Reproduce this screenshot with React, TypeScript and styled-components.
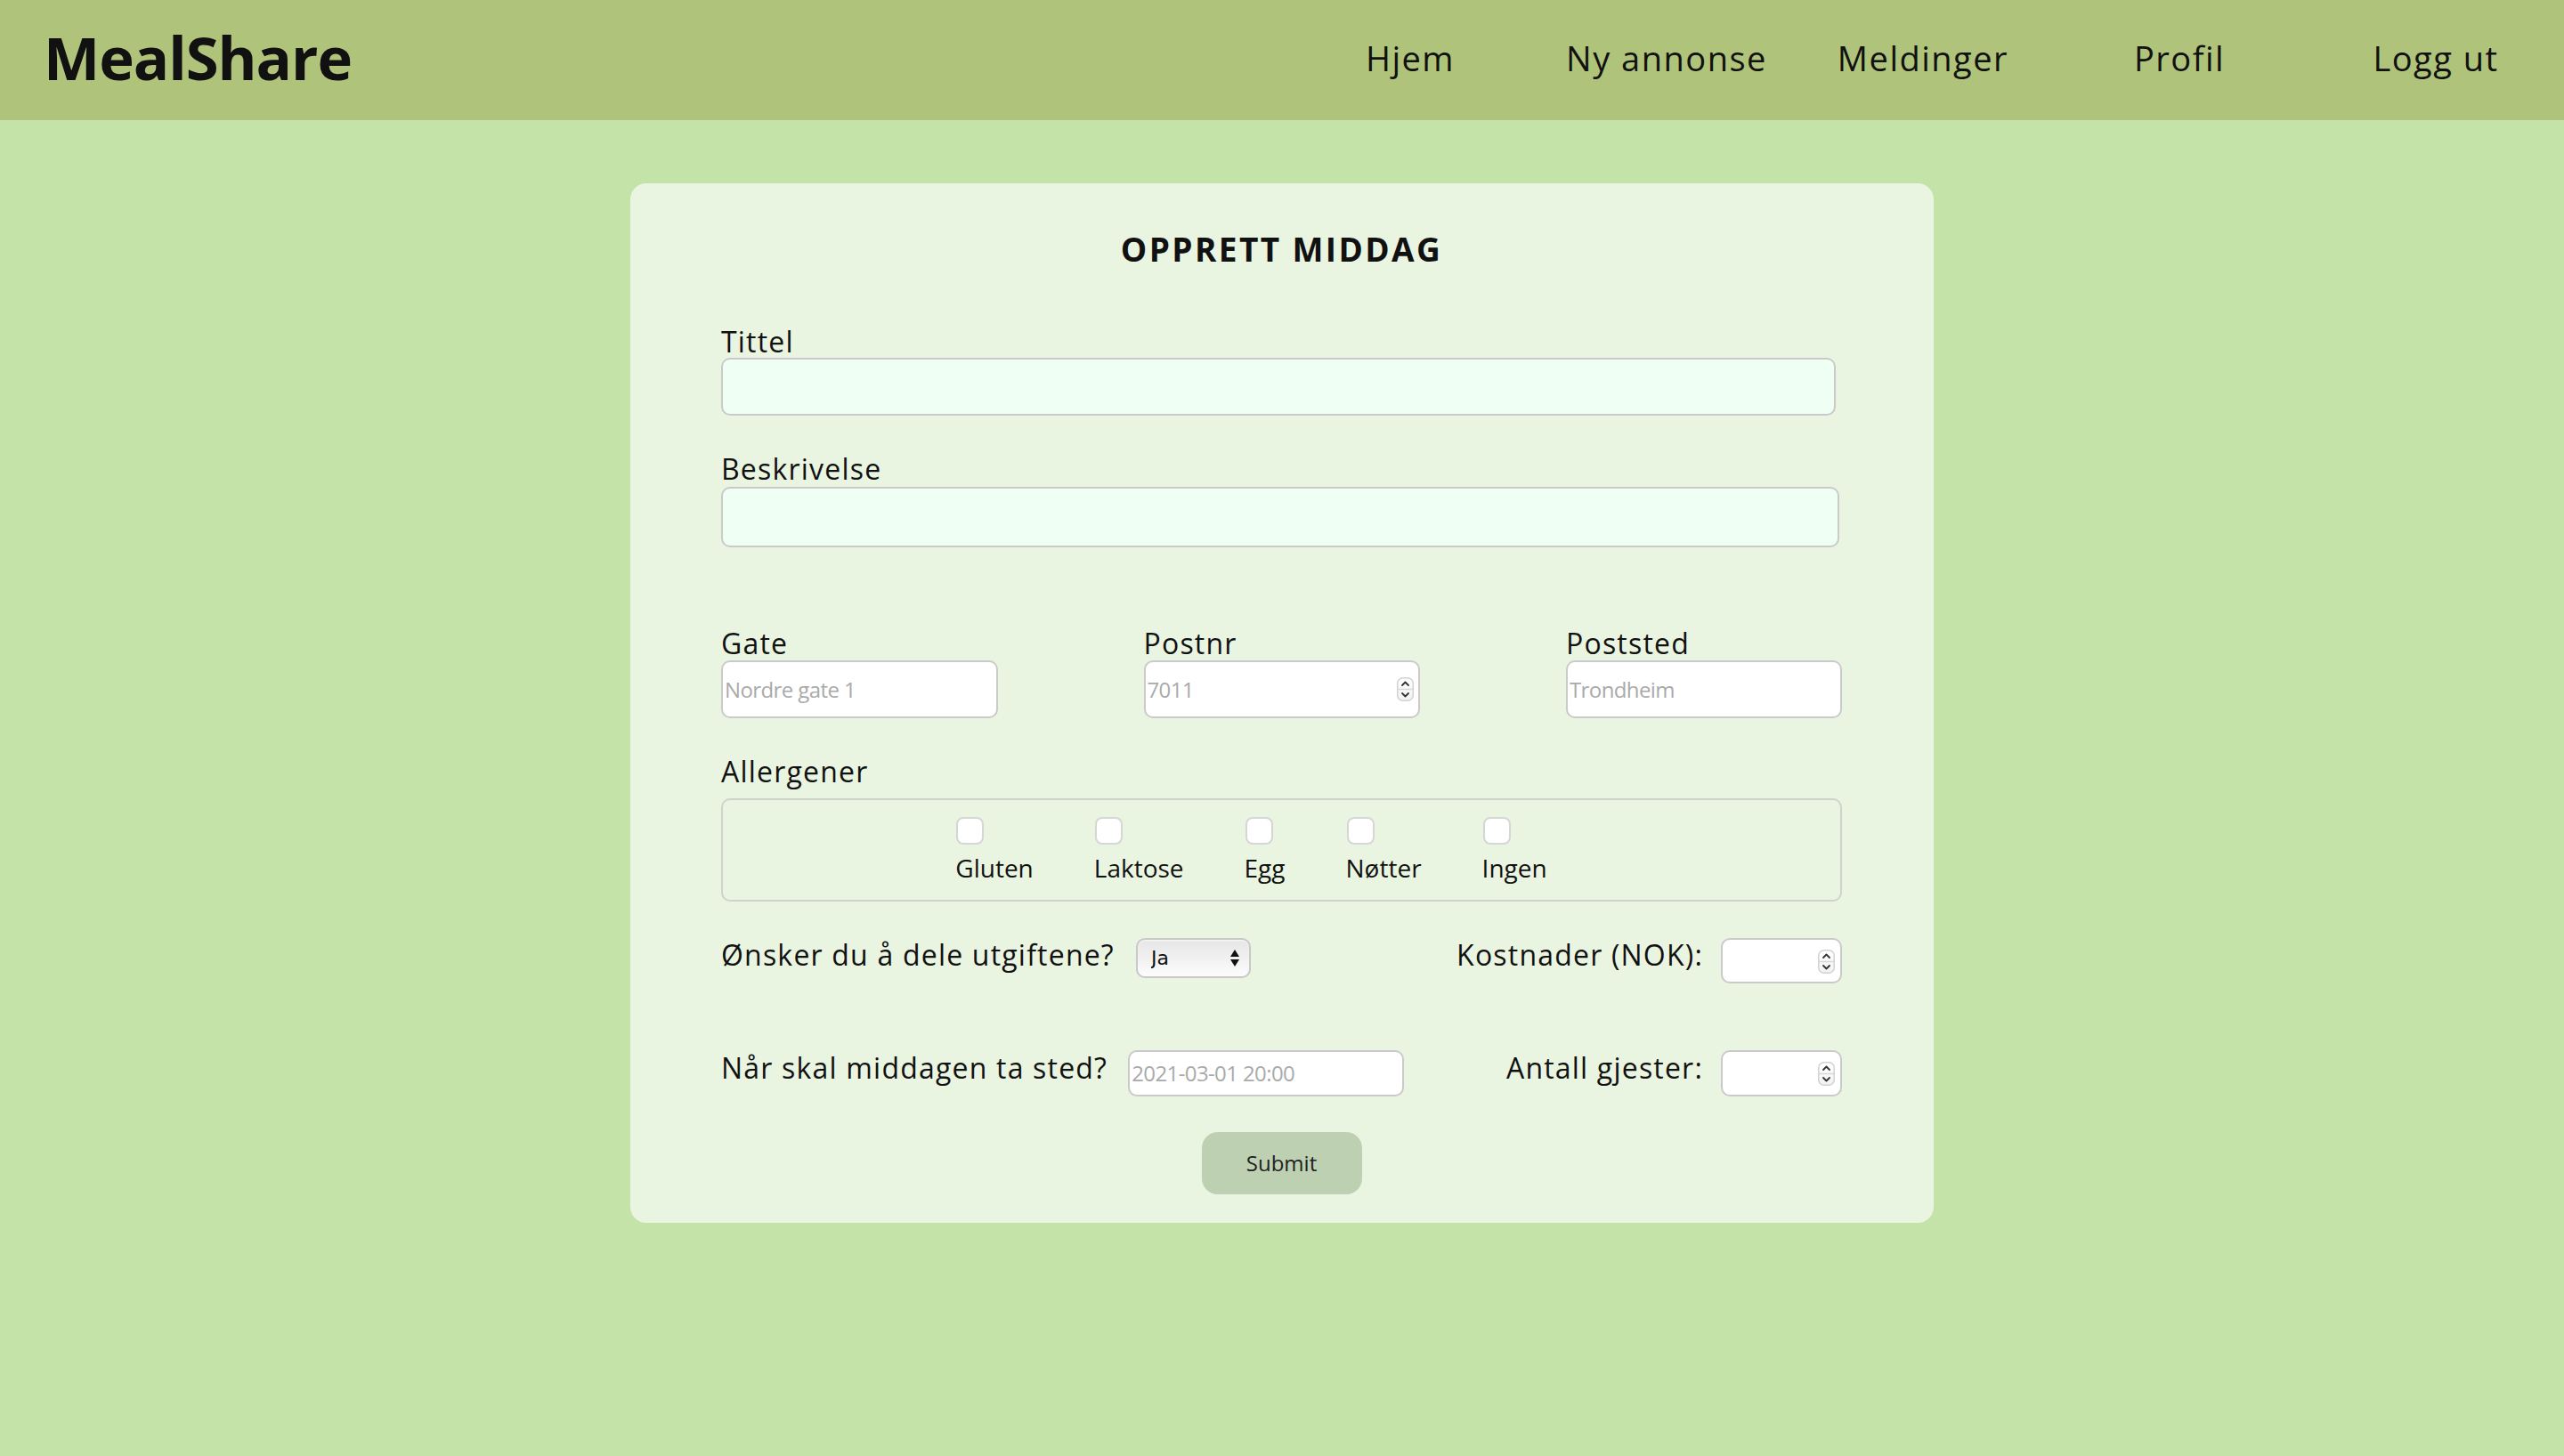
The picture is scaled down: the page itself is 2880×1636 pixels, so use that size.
import React from "react";
import styled, { createGlobalStyle } from "styled-components";

const GlobalStyle = createGlobalStyle`
  html, body { margin: 0; padding: 0; background: #c3e3a9; }
  body { font-family: "Open Sans", "Noto Sans", sans-serif; color: #111; }
  * { box-sizing: border-box; }
`;

const Page = styled.div`
  min-height: 100vh;
  background: #c3e3a9;
`;

const Header = styled.header`
  height: 135px;
  background: #afc47a;
  display: flex;
  align-items: center;
  justify-content: space-between;
  padding: 0 0 6px 49px;
`;

const Logo = styled.h1`
  margin: 0;
  font-size: 67px;
  font-weight: 700;
  line-height: 1;
  letter-spacing: -1px;
  color: #111;
`;

const Nav = styled.nav`
  width: 1440px;
  display: grid;
  grid-template-columns: repeat(5, 1fr);
`;

const NavLink = styled.a`
  text-align: center;
  font-size: 38px;
  line-height: 1;
  letter-spacing: 1.5px;
  color: #111;
  text-decoration: none;
`;

const Main = styled.main`
  padding-top: 71px;
  display: flex;
  justify-content: center;
`;

const Card = styled.form`
  width: 1464px;
  background: #eaf5e1;
  border-radius: 18px;
  padding: 49px 103px 32px 102px;
  display: flex;
  flex-direction: column;
`;

const Title = styled.h3`
  margin: 0;
  font-size: 37px;
  line-height: 50px;
  font-weight: 700;
  letter-spacing: 2.4px;
  text-align: center;
  color: #111;
`;

const Label = styled.label<{ $mt?: number }>`
  display: block;
  margin-top: ${(p) => p.$mt ?? 0}px;
  margin-bottom: -2px;
  padding-top: 2px;
  font-size: 32px;
  line-height: 40px;
  letter-spacing: 1.2px;
  color: #111;
  white-space: nowrap;
`;

const BaseInput = styled.input<{ $w: number; $h: number; $mt?: number; $bg?: string }>`
  display: block;
  width: ${(p) => p.$w}px;
  height: ${(p) => p.$h}px;
  margin-top: ${(p) => p.$mt ?? 0}px;
  background: ${(p) => p.$bg ?? "#fff"};
  border: 2px solid #cacaca;
  border-radius: 10px;
  padding: 0 0 0 2px;
  font-family: "Open Sans", sans-serif;
  font-size: 24px;
  letter-spacing: -0.6px;
  color: #111;
  outline: none;
  &::placeholder { color: #aaaaaa; }
  &::-webkit-inner-spin-button, &::-webkit-outer-spin-button { -webkit-appearance: none; margin: 0; }
`;

const ThreeCols = styled.div`
  display: flex;
  justify-content: space-between;
  margin-top: 85.6px;
`;

const Column = styled.div`
  display: flex;
  flex-direction: column;
  width: 310px;
`;

const SpinWrap = styled.div<{ $mt?: number }>`
  position: relative;
  margin-top: ${(p) => p.$mt ?? 0}px;
`;

const SpinIcon = styled.svg<{ $top: number; $right: number }>`
  position: absolute;
  top: ${(p) => p.$top}px;
  right: ${(p) => p.$right}px;
  pointer-events: none;
`;

const Fieldset = styled.fieldset`
  margin: 12.4px 0 0;
  height: 116px;
  border: 2px solid #d0d3cc;
  border-radius: 10px;
  padding: 19px 0 0;
  display: flex;
  justify-content: center;
  align-items: flex-start;
`;

const CheckItem = styled.label`
  display: flex;
  flex-direction: column;
  align-items: flex-start;
  margin-right: 68px;
`;

const CheckBox = styled.input`
  appearance: none;
  -webkit-appearance: none;
  width: 31px;
  height: 31px;
  margin: 0 0 0 1px;
  background: #fff;
  border: 2px solid #d6d6d6;
  border-radius: 8px;
`;

const CheckText = styled.span`
  margin-top: 8px;
  font-size: 28px;
  line-height: 36px;
  color: #111;
`;

const Row = styled.div<{ $mt: number }>`
  display: flex;
  justify-content: space-between;
  align-items: flex-start;
  margin-top: ${(p) => p.$mt}px;
`;

const Group = styled.div<{ $gap: number }>`
  display: flex;
  align-items: flex-start;
  gap: ${(p) => p.$gap}px;
`;

const SelectWrap = styled.div`
  position: relative;
  width: 129px;
  height: 45px;
  margin-top: 3.4px;
`;

const Select = styled.select`
  appearance: none;
  -webkit-appearance: none;
  width: 100%;
  height: 100%;
  border: 2px solid #c8c8c8;
  border-radius: 10px;
  background: linear-gradient(#e6e6e6, #f3f3f3 60%, #fdfdfd);
  box-shadow: inset 0 1px 2px rgba(255,255,255,0.8);
  padding: 0 0 0 15px;
  font-family: "DejaVu Sans", sans-serif;
  font-size: 22px;
  color: #111;
  outline: none;
`;

const SelectArrows = styled.svg`
  position: absolute;
  top: 13px;
  right: 13px;
  pointer-events: none;
`;

const SubmitButton = styled.button`
  display: block;
  align-self: center;
  margin-top: 40px;
  width: 180px;
  height: 70px;
  background: #bdd1b2;
  border: none;
  border-radius: 18px;
  font-family: "Open Sans", sans-serif;
  font-size: 24px;
  color: #222;
`;

const Spinner = ({ top, right }: { top: number; right: number }) => (
  <SpinIcon $top={top} $right={right} width="19" height="27" viewBox="0 0 19 27">
    <defs>
      <linearGradient id="spg" x1="0" y1="0" x2="0" y2="1">
        <stop offset="0" stopColor="#ffffff" />
        <stop offset="1" stopColor="#f2f2f2" />
      </linearGradient>
    </defs>
    <rect x="0.75" y="0.75" width="17.5" height="25.5" rx="6" fill="url(#spg)" stroke="#d2d2d2" strokeWidth="1.5" />
    <line x1="1" y1="13.5" x2="18" y2="13.5" stroke="#d8d8d8" strokeWidth="1.5" />
    <polyline points="6,9 9.5,5.5 13,9" fill="none" stroke="#333" strokeWidth="1.8" strokeLinecap="round" strokeLinejoin="round" />
    <polyline points="6,18 9.5,21.5 13,18" fill="none" stroke="#333" strokeWidth="1.8" strokeLinecap="round" strokeLinejoin="round" />
  </SpinIcon>
);

const allergens = ["Gluten", "Laktose", "Egg", "Nøtter", "Ingen"];
const navItems = ["Hjem", "Ny annonse", "Meldinger", "Profil", "Logg ut"];

export default function App() {
  return (
    <Page>
      <GlobalStyle />
      <Header>
        <Logo>MealShare</Logo>
        <Nav>
          {navItems.map((n) => (
            <NavLink key={n} href="#">{n}</NavLink>
          ))}
        </Nav>
      </Header>
      <Main>
        <Card onSubmit={(e) => e.preventDefault()}>
          <Title>OPPRETT MIDDAG</Title>

          <Label $mt={57}>Tittel</Label>
          <BaseInput $w={1252} $h={65} $bg="#f0fff4" />

          <Label $mt={37.6}>Beskrivelse</Label>
          <BaseInput $w={1256} $h={68} $mt={2.4} $bg="#f0fff4" />

          <ThreeCols>
            <Column>
              <Label>Gate</Label>
              <BaseInput $w={311} $h={65} $mt={1.4} placeholder="Nordre gate 1" />
            </Column>
            <Column>
              <Label>Postnr</Label>
              <SpinWrap $mt={1.4}>
                <BaseInput type="number" $w={310} $h={65} placeholder="7011" />
                <Spinner top={19} right={7} />
              </SpinWrap>
            </Column>
            <Column>
              <Label>Poststed</Label>
              <BaseInput $w={310} $h={65} $mt={1.4} placeholder="Trondheim" />
            </Column>
          </ThreeCols>

          <Label $mt={37.6}>Allergener</Label>
          <Fieldset>
            {allergens.map((a) => (
              <CheckItem key={a}>
                <CheckBox type="checkbox" />
                <CheckText>{a}</CheckText>
              </CheckItem>
            ))}
          </Fieldset>

          <Row $mt={37.6}>
            <Group $gap={24}>
              <Label>Ønsker du å dele utgiftene?</Label>
              <SelectWrap>
                <Select defaultValue="Ja">
                  <option>Ja</option>
                  <option>Nei</option>
                </Select>
                <SelectArrows width="10" height="19" viewBox="0 0 10 19">
                  <polygon points="0,8 5,0 10,8" fill="#111" />
                  <polygon points="0,11 10,11 5,19" fill="#111" />
                </SelectArrows>
              </SelectWrap>
            </Group>
            <Group $gap={20}>
              <Label>Kostnader (NOK):</Label>
              <SpinWrap $mt={3.4}>
                <BaseInput type="number" $w={136} $h={51} />
                <Spinner top={13} right={8} />
              </SpinWrap>
            </Group>
          </Row>

          <Row $mt={72.6}>
            <Group $gap={23}>
              <Label>Når skal middagen ta sted?</Label>
              <BaseInput $w={310} $h={52} $mt={2.4} placeholder="2021-03-01 20:00" />
            </Group>
            <Group $gap={20}>
              <Label>Antall gjester:</Label>
              <SpinWrap $mt={2.4}>
                <BaseInput type="number" $w={136} $h={52} />
                <Spinner top={13} right={8} />
              </SpinWrap>
            </Group>
          </Row>

          <SubmitButton type="submit">Submit</SubmitButton>
        </Card>
      </Main>
    </Page>
  );
}
